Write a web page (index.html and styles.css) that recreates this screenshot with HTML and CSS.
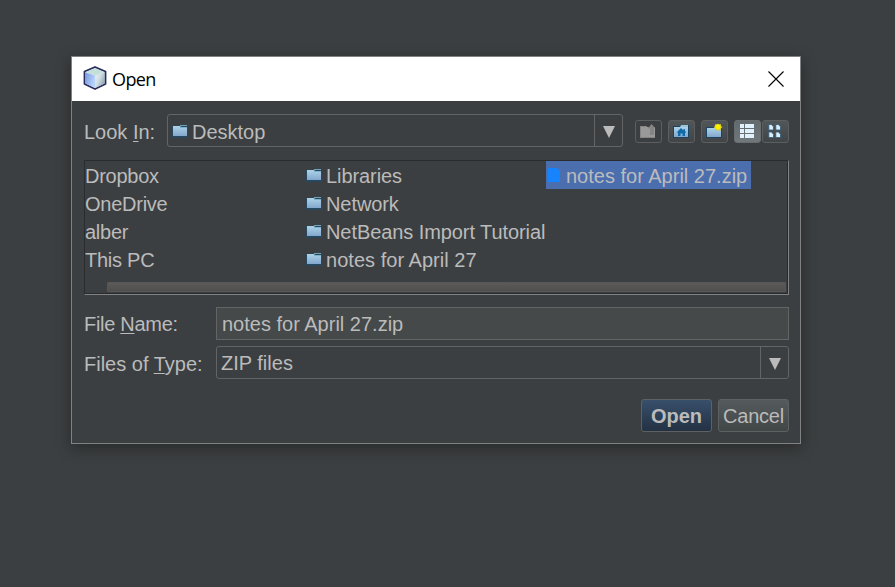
FILE: index.html
```html
<!DOCTYPE html>
<html lang="en">
<head>
<meta charset="utf-8">
<title>Open</title>
<link rel="stylesheet" href="styles.css">
</head>
<body>
<svg width="0" height="0" class="defs">
  <defs>
    <linearGradient id="blue" x1="0" y1="0" x2="0" y2="1"><stop offset="0" stop-color="#add3ea"/><stop offset="1" stop-color="#82a7cd"/></linearGradient>
    <linearGradient id="cubeLeft" x1="0" y1="0" x2="1" y2=".4"><stop offset="0" stop-color="#7898e0"/><stop offset="1" stop-color="#b9d4fa"/></linearGradient>
    <linearGradient id="cubeRight" x1="0" y1="0" x2="1" y2=".7"><stop offset="0" stop-color="#e6f0f8"/><stop offset=".5" stop-color="#cfdde2"/><stop offset="1" stop-color="#8fa3b0"/></linearGradient>
    <symbol id="folder" viewBox="0 0 16 14">
      <path d="M0 1h8V0h7v1h1v12H0z" fill="#27485f"/>
      <path d="M1 1h7l1 1h6v9H1z" fill="url(#blue)"/>
      <path d="M8 0h7v1H8z" fill="#6fa4bc"/>
      <path d="M8 2.500h7" fill="none" stroke="#7fb0c6"/>
    </symbol>
  </defs>
</svg>
<main class="dialog">
  <header class="titlebar">
    <svg class="cube" width="24" height="24" viewBox="0 0 24 24">
      <path d="M12 1 22.500 5.500V18L12 23 1.500 18V5.500z" fill="#d6e7e8" stroke="#292c5c" stroke-width="1.800" stroke-linejoin="round"/>
      <path d="M2.500 6.500 12 9.500v12.500L2.500 17.500z" fill="url(#cubeLeft)"/>
      <path d="M12 9.500 21.500 6.500V17.500L12 22z" fill="url(#cubeRight)"/>
      <path d="M3 6 12 2.200 21 6l-9 3.300z" fill="#c5dfda"/>
    </svg>
    <h1 class="title">Open</h1>
    <svg class="close" width="16" height="16" viewBox="0 0 16 16"><path d="m.5.5 15 15m0-15-15 15" stroke="#000" stroke-width="1.100"/></svg>
  </header>
  <section class="content">
    <div class="look-row">
      <span class="label">Look <u>I</u>n:</span>
      <div class="combo look-combo">
        <span class="combo-value"><svg class="folder" width="16" height="14"><use href="#folder"/></svg>Desktop</span>
        <span class="arrow"><svg width="12" height="12"><path d="M0 0h12L6 12z" fill="#bbb"/></svg></span>
      </div>
      <div class="tools">
        <button class="tool disabled" aria-label="Up one level"><svg width="17" height="15" viewBox="0 0 17 15"><path d="M0 2h7v1h8v11H0z" fill="#858585"/><path d="M1 3h7v1h7v9H1z" fill="#999"/><path d="M11.500 0 8 4.500h2V11h4V4.500h1.500z" fill="#858585"/></svg></button>
        <button class="tool" aria-label="Home"><svg width="17" height="15" viewBox="0 0 17 15"><path d="M0 2h7V1h9v13H0z" fill="#1c435f"/><path d="M1 3h14v10H1z" fill="url(#blue)"/><path d="M8 1h7v2H7z" fill="#9bc6d8"/><path d="M8 4 3.500 8.500H5V12h2.500V9.500h2V12H12V8.500h1.500L12 7V5h-1.500v1.500z" fill="#116aa8"/></svg></button>
        <button class="tool" aria-label="New folder"><svg width="17" height="17" viewBox="0 0 17 17"><path d="M0 4h7l1-1h8v12H0z" fill="#1c435f"/><path d="M1 5h14v9H1z" fill="url(#blue)"/><path d="m12 .5 1 1 2-.5v2l1.500 1-1.500 1.500v2l-2-.5-1 1-1-1-2 .5v-2L7.500 4 9 3V1l2 .5z" fill="#c6c52c"/><circle cx="12" cy="4" r="2.700" fill="#fff000"/></svg></button>
        <button class="tool selected" aria-label="List"><svg width="14" height="14" shape-rendering="crispEdges"><path d="M0 0h4v4H0zM5 0h9v4H5zM0 5h4v4H0zM5 5h9v4H5zM0 10h4v4H0zM5 10h9v4H5z" fill="#e0f0fc"/></svg></button>
        <button class="tool details" aria-label="Details"><svg width="14" height="14" viewBox="0 0 14 14"><g fill="#d8edfb" stroke="#315a79" stroke-width=".8"><path id="page" d="M.8.500H3.300L5.500 2.700V6H.8z"/><use href="#page" x="7"/><use href="#page" y="7.500"/><use href="#page" x="7" y="7.500"/></g></svg></button>
      </div>
    </div>
    <div class="files">
      <div class="columns">
        <ul class="column first"><li>Dropbox</li><li>OneDrive</li><li>alber</li><li>This PC</li></ul>
        <ul class="column second">
          <li><svg class="folder" width="16" height="14"><use href="#folder"/></svg>Libraries</li>
          <li><svg class="folder" width="16" height="14"><use href="#folder"/></svg>Network</li>
          <li><svg class="folder" width="16" height="14"><use href="#folder"/></svg>NetBeans Import Tutorial</li>
          <li><svg class="folder" width="16" height="14"><use href="#folder"/></svg><span class="normal">notes for April 27</span></li>
        </ul>
        <ul class="column third"><li class="picked"><svg class="file" width="12" height="14"><path d="M0 0h9l3 3v11H0z" fill="#1684ff"/></svg>notes for April 27.zip</li></ul>
      </div>
      <div class="thumb"></div>
    </div>
    <div class="form">
      <span class="label name-label">File <u>N</u>ame:</span>
      <div class="field">notes for April 27.zip</div>
      <span class="label type-label">Files of <u>T</u>ype:</span>
      <div class="combo">
        <span class="combo-value zip">ZIP files</span>
        <span class="arrow"><svg width="12" height="12"><path d="M0 0h12L6 12z" fill="#bbb"/></svg></span>
      </div>
    </div>
    <footer class="actions"><button class="action primary">Open</button><button class="action">Cancel</button></footer>
  </section>
</main>
</body>
</html>
```
FILE: styles.css
```css
* { box-sizing: border-box; }
body {
  margin: 0;
  height: 587px;
  overflow: hidden;
  padding: 56px 0 0 71px;
  background: #3c3f41;
  color: #bbb;
  font: 20px/28px "Liberation Sans", Arial, sans-serif;
}
.defs { position: absolute; }
svg { display: block; flex: none; }
ul { list-style: none; margin: 0; padding: 0; }
button { font: inherit; color: inherit; padding: 0; }
u { text-decoration-thickness: 1px; text-underline-offset: 2px; }

.dialog {
  width: 730px;
  height: 388px;
  border: 1px solid #808283;
  background: #3c3f41;
  box-shadow: 0 4px 14px rgba(0, 0, 0, .35);
}
.titlebar {
  display: flex;
  align-items: center;
  height: 44px;
  padding: 0 16px 0 11px;
  background: #fff;
  color: #000;
}
.cube { margin-bottom: 2px; }
.title { margin: 0 0 1px 5px; font: 18px/24px "Open Sans", sans-serif; letter-spacing: -.6px; }
.close { margin: 0 0 1px auto; }
.content { padding: 13px 11px 0 12px; }

.look-row { display: flex; height: 33px; align-items: center; }
.label { white-space: nowrap; padding-top: 2px; }
.look-row .label { width: 83px; }
.combo { display: flex; height: 33px; border: 1px solid #646464; border-radius: 3px; }
.look-combo { width: 456px; }
.combo-value { flex: 1; display: flex; align-items: center; padding: 3px 0 0 4px; }
.combo-value .folder { margin: -1px 4px 0 0; }
.zip { padding-top: 1px; }
.arrow { width: 28px; border-left: 1px solid #646464; display: flex; align-items: center; justify-content: center; padding-top: 2px; }
.tools { display: flex; gap: 6px; margin-left: 12px; padding-top: 1px; }
.tool {
  width: 27px;
  height: 23px;
  border: 1px solid #5c5f60;
  border-radius: 3px;
  background: linear-gradient(#515658, #414547);
  display: flex;
  align-items: center;
  justify-content: center;
}
.disabled { background: #3c3f41; }
.selected { background: linear-gradient(#636a6d, #70787b); border-color: #686e70; }
.selected svg { margin-right: 1px; }
.details { margin-left: -5px; }
.details svg { margin-right: 1px; }

.files {
  height: 135px;
  margin-top: 13px;
  border: 1px solid #292b2d;
  border-right-color: #808283;
  border-bottom-color: #808283;
  box-shadow: inset -1px -1px #292b2d;
}
.columns { display: flex; height: 121px; }
.column li { display: flex; align-items: center; height: 28px; padding-top: 2px; white-space: nowrap; }
.first { width: 221px; letter-spacing: -.25px; }
.second { width: 240px; letter-spacing: -.08px; }
.normal { letter-spacing: .03px; }
.column .folder { margin: -1px 4px 0 0; }
.third .picked { width: 205px; background: #4b6eaf; padding-left: 2px; }
.file { margin: -2px 6px 0 0; }
.thumb { height: 10px; margin: 0 2px 0 22px; border-radius: 1px; background: linear-gradient(#5b5a59, #504f4e); border: 1px solid #575757; }

.form {
  display: grid;
  grid-template-columns: 132px 1fr;
  row-gap: 6px;
  margin-top: 12px;
  align-items: center;
}
.name-label { padding-top: 0; letter-spacing: -.3px; }
.field { height: 33px; border: 1px solid #646464; background: #45494a; padding: 2px 5px 0; }
.type-label { padding-top: 3px; }
.actions { display: flex; justify-content: flex-end; gap: 6px; margin-top: 20px; }
.action {
  width: 71px;
  height: 33px;
  border: 1px solid #5e6162;
  border-radius: 3px;
  background: linear-gradient(#555a5c, #414647);
  letter-spacing: -.25px;
}
.primary { background: linear-gradient(#384f6b, #233143); font-weight: bold; letter-spacing: 0; }
```
